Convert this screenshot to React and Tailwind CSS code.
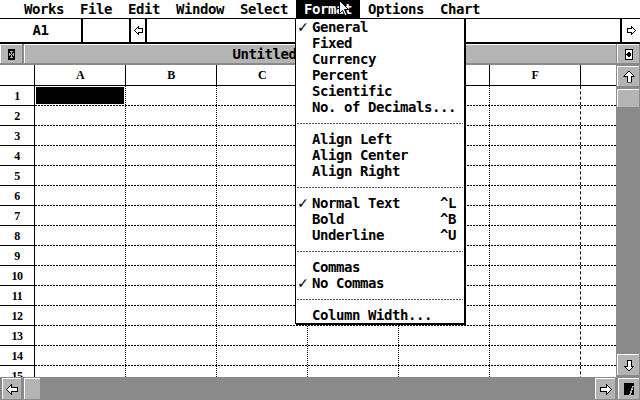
import React from "react";

const mono = "font-['DejaVu_Sans_Mono',monospace] font-bold text-[14px] tracking-[-0.43px]";
const serif = "font-['Liberation_Serif',serif] font-bold text-[12px]";

const menus = ["Works", "File", "Edit", "Window", "Select", "Format", "Options", "Chart"];
const columns = ["A", "B", "C", "D", "E", "F", ""];
const rows = Array.from({ length: 15 }, (_, i) => i + 1);

const formatItems = [
  { label: "General", check: true },
  { label: "Fixed" },
  { label: "Currency" },
  { label: "Percent" },
  { label: "Scientific" },
  { label: "No. of Decimals..." },
  { sep: true },
  { label: "Align Left" },
  { label: "Align Center" },
  { label: "Align Right" },
  { sep: true },
  { label: "Normal Text", check: true, key: "^L" },
  { label: "Bold", key: "^B" },
  { label: "Underline", key: "^U" },
  { sep: true },
  { label: "Commas" },
  { label: "No Commas", check: true },
  { sep: true },
  { label: "Column Width..." },
];

// hollow arrow pointing left, rotated for the other directions
function Arrow({ size = "small", className = "" }) {
  if (size === "small") {
    return (
      <svg width="9" height="9" viewBox="0 0 9 9" className={className} shapeRendering="crispEdges">
        <polygon points="0.5,4.5 4.5,0.5 4.5,2.5 8.5,2.5 8.5,6.5 4.5,6.5 4.5,8.5" fill="white" stroke="black" />
      </svg>
    );
  }
  return (
    <svg width="12" height="11" viewBox="0 0 12 11" className={className} shapeRendering="crispEdges">
      <polygon points="0.5,5.5 5.5,0.5 5.5,3.5 11.5,3.5 11.5,7.5 5.5,7.5 5.5,10.5" fill="white" stroke="black" />
    </svg>
  );
}

function CloseIcon() {
  return (
    <svg width="7" height="11" viewBox="0 0 7 11" shapeRendering="crispEdges">
      <rect x="0" y="0" width="7" height="2" fill="black" />
      <rect x="0" y="9" width="7" height="2" fill="black" />
      <rect x="0.5" y="0.5" width="6" height="10" fill="none" stroke="black" />
      <path d="M1 2 L6 9 M6 2 L1 9" stroke="black" />
    </svg>
  );
}

function FullIcon() {
  return (
    <svg width="8" height="11" viewBox="0 0 8 11" shapeRendering="crispEdges">
      <rect x="0.5" y="0.5" width="7" height="10" fill="white" stroke="black" />
      <polygon points="4,2 6.5,5.5 4,9 1.5,5.5" fill="black" />
    </svg>
  );
}

function SizeIcon() {
  return (
    <svg width="10" height="12" viewBox="0 0 10 12" shapeRendering="crispEdges">
      <rect x="0" y="0" width="10" height="12" fill="black" />
      <path d="M9 3 L6 12" stroke="#b4b4b4" strokeWidth="1.5" />
    </svg>
  );
}

function Pointer() {
  return (
    <svg width="11" height="17" viewBox="0 0 11 17" className="absolute left-[339px] top-0">
      <polygon points="0.5,0.5 0.5,13.5 3.5,10.5 6,16 8,15 5.5,9.5 9.5,9.5" fill="white" stroke="black" />
    </svg>
  );
}

const btn = "bg-[#b4b4b4] border-t border-l border-white flex items-center justify-center";

function App() {
  return (
    <div className={`relative w-[640px] h-[400px] overflow-hidden bg-white text-black ${mono}`}>
      {/* Menu bar */}
      <div className="flex h-[19px] border-b border-black pl-[16px] leading-[18px]">
        {menus.map((m) => (
          <span key={m} className={m === "Format" ? "px-[8px] bg-black text-white" : "px-[8px]"}>
            {m}
          </span>
        ))}
      </div>

      {/* Formula bar */}
      <div className="flex h-[25px] border-b-2 border-black">
        <div className="w-[83px] border-r-2 border-black flex items-center justify-center">A1</div>
        <div className="w-[48px] border-r-2 border-black"></div>
        <div className="w-[16px] border-r-2 border-black flex items-center justify-center">
          <Arrow />
        </div>
        <div className="flex-1 border-r-2 border-black"></div>
        <div className="w-[18px] flex items-center justify-center">
          <Arrow className="rotate-180" />
        </div>
      </div>

      {/* Worksheet window */}
      <div className="flex h-[333px]">
        <div className="flex flex-col w-[616px]">
          <div className="flex h-[21px] bg-[#8a8a8a]">
            <div className={`w-[22px] h-[19px] ${btn}`}>
              <CloseIcon />
            </div>
            <div className={`ml-[2px] flex-1 h-[19px] ${btn}`}>Untitled Spreadsheet 1</div>
          </div>

          <div className="flex-1 overflow-hidden">
            {/* Column headers */}
            <div className="flex h-[21px] border-b border-black">
              <div className="w-[35px] shrink-0 border-r border-black"></div>
              {columns.map((c, i) => (
                <div
                  key={i}
                  className={`w-[91px] shrink-0 border-r border-black flex items-center justify-center ${serif}`}
                >
                  {c}
                </div>
              ))}
            </div>

            {/* Rows */}
            {rows.map((r) => (
              <div key={r} className="flex flex-col h-[20px]">
                <div className="flex h-[19px]">
                  <div className={`w-[35px] shrink-0 border-r border-black flex items-center justify-center ${serif}`}>
                    {r}
                  </div>
                  {columns.map((c, i) => (
                    <div
                      key={i}
                      className={`w-[91px] shrink-0 border-r border-black ${
                        c === "F" ? "border-dashed" : "border-dotted"
                      } ${r === 1 && c === "A" ? "p-px" : ""}`}
                    >
                      {r === 1 && c === "A" && <div className="h-full bg-black"></div>}
                    </div>
                  ))}
                </div>
                <div className="flex h-px">
                  <div className="w-[35px] shrink-0 bg-black"></div>
                  <div className="flex-1 bg-[repeating-linear-gradient(90deg,#000_0_2px,transparent_2px_3px)]"></div>
                </div>
              </div>
            ))}
          </div>
        </div>

        {/* Vertical scroll bar */}
        <div className="w-[24px] bg-[#8a8a8a] flex flex-col items-center">
          <div className={`w-[22px] h-[19px] ${btn}`}>
            <FullIcon />
          </div>
          <div className={`mt-[3px] w-[22px] h-[20px] ${btn}`}>
            <Arrow size="big" className="rotate-90" />
          </div>
          <div className={`mt-[3px] w-[22px] h-[18px] ${btn}`}></div>
          <div className="flex-1"></div>
          <div className={`mb-[2px] w-[22px] h-[21px] ${btn}`}>
            <Arrow size="big" className="-rotate-90" />
          </div>
        </div>
      </div>

      {/* Horizontal scroll bar */}
      <div className="flex h-[23px] bg-[#8a8a8a] pt-px">
        <div className={`ml-[2px] w-[19px] h-[21px] ${btn}`}>
          <Arrow size="big" />
        </div>
        <div className={`ml-[3px] w-[16px] h-[21px] ${btn}`}></div>
        <div className="flex-1"></div>
        <div className={`w-[20px] h-[21px] ${btn}`}>
          <Arrow size="big" className="rotate-180" />
        </div>
        <div className={`ml-[3px] mr-[1px] w-[21px] h-[21px] ${btn}`}>
          <SizeIcon />
        </div>
      </div>

      {/* Format menu */}
      <div className="absolute left-[295px] top-[18px] w-[170px] h-[306px] bg-white border border-black shadow-[1px_1px_0_#000]">
        {formatItems.map((item, i) =>
          item.sep ? (
            <div key={i} className="h-[16px] flex items-center px-px">
              <div className="h-px w-full bg-[repeating-linear-gradient(90deg,#555_0_2px,transparent_2px_3px)]"></div>
            </div>
          ) : (
            <div key={i} className="flex h-[16px] leading-[16px] whitespace-pre">
              <span className="w-[16px] pl-[2px] text-[16px] font-normal">{item.check ? "✓" : ""}</span>
              <span>{item.label}</span>
              {item.key && <span className="ml-auto pr-[8px]">{item.key}</span>}
            </div>
          )
        )}
      </div>

      <Pointer />
    </div>
  );
}

export default App;
